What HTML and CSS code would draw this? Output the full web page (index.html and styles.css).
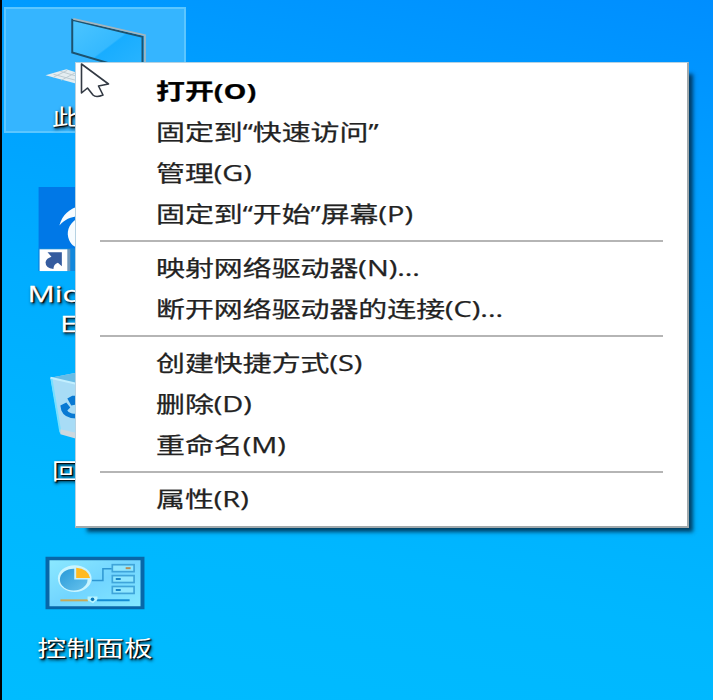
FILE: index.html
```html
<!DOCTYPE html>
<html lang="zh-CN">
<head>
<meta charset="utf-8">
<title>桌面</title>
<link rel="stylesheet" href="styles.css">
</head>
<body>
<main class="desktop">
  <div class="shortcuts">
    <div class="shortcut selected">
      <svg class="icon" viewBox="4 7 182 95">
        <defs><linearGradient id="screen" x1="0" y1="0" x2="1" y2="1"><stop offset="0" stop-color="#4cc5ff"/><stop offset=".5" stop-color="#35b9ff"/><stop offset=".52" stop-color="#18adff"/><stop offset="1" stop-color="#2cb5ff"/></linearGradient></defs>
        <path d="M72 20L143 37V74L72 53Z" fill="url(#screen)" stroke="#1c526f" stroke-width="2"/>
        <path d="M73 19L145.500 35.500V74" fill="none" stroke="#a5b5bd" stroke-width="1.800"/>
        <path d="M45 76L66 70L82 75V86Z" fill="#e4edf1"/>
        <path d="M53 75L79 82M60 72L80 78M53 78L67 71M61 81L76 73" stroke="#bccad1" stroke-width="1"/>
      </svg>
      <div class="label"><span>此电脑</span></div>
    </div>
    <div class="shortcut">
      <svg class="icon" viewBox="4 184 182 95">
        <path d="M38 187H140V272H38Z" fill="#0078e7"/>
        <path d="M38 249H75V272H38Z" fill="#1187dc"/>
        <path d="M59 226C62 215 69 209 80 206V216C70 217 64 220 59 226ZM80 217C70 222 66 230 68 238C70 245 74 248 80 249Z" fill="#f7fcff"/>
        <path d="M66 250H70V272H66Z" fill="#6f98bb"/>
        <path d="M39 250H67V272H39Z" fill="#fff"/>
        <path d="M47 253H61.500V267L57.500 263.500Q53 265 53 270Q45 269 45 263Q46 259 51 257.500Z" fill="#355c9f"/>
      </svg>
      <div class="label wide"><span>Microsoft<br>Edge</span></div>
    </div>
    <div class="shortcut">
      <svg class="icon" viewBox="4 361 182 95">
        <path d="M50 378L76 373L135 379L120 438H76L60 434Z" fill="#a8dcf6"/>
        <path d="M50 378L76 373V384Z" fill="#68bce6"/>
        <path d="M50 378L76 384" stroke="#c2efff" stroke-width="2"/>
        <path d="M51 379L60 433" stroke="#75dfff" stroke-width="2"/>
        <path d="M60 430L78 434V440L60 435Z" fill="#ccd8df"/>
        <path d="M67 399L72 396H76V405L71 406ZM60 406L66 403L70 408L67 411Q70 415 76 414V419Q64 419 61 411Z" fill="#0879d3"/>
      </svg>
      <div class="label"><span>回收站</span></div>
    </div>
    <div class="shortcut">
      <svg class="icon" viewBox="4 538 182 95">
        <defs><linearGradient id="panel" x2="1" y2="1"><stop stop-color="#8be8ff"/><stop offset=".5" stop-color="#72d5ff"/><stop offset="1" stop-color="#83e8ff"/></linearGradient><linearGradient id="pie" y2="1"><stop stop-color="#2899d8"/><stop offset="1" stop-color="#67c3ed"/></linearGradient></defs>
        <path d="M45 557H145V610H45Z" fill="#0867a8"/>
        <path d="M49 560.500H141V607H49Z" fill="url(#panel)"/>
        <ellipse cx="74.500" cy="579" rx="17" ry="13.500" fill="#c9f5ff"/>
        <ellipse cx="73.500" cy="580" rx="14" ry="11" fill="url(#pie)"/>
        <path d="M74 580V567Q90 567 91 580Z" fill="#c7f3ff"/>
        <path d="M76 578.500V568Q88 569 90 578.500Z" fill="#ffba20"/>
        <path d="M92 581H103V569H112" fill="none" stroke="#2d96d2" stroke-width="1.500"/>
        <g fill="#8ee6ff" stroke="#3fa5da" stroke-width="1.700"><rect x="112.500" y="565" width="22" height="7"/><rect x="112.500" y="576" width="22" height="7"/><rect x="112.500" y="587" width="22" height="7"/></g>
        <path d="M126 568.500H131" stroke="#b48e58" stroke-width="2"/>
        <path d="M116 579.500H121M116 590.500H121" stroke="#1885c6" stroke-width="2"/>
        <path d="M60 601H88" stroke="#c7aa58" stroke-width="2"/>
        <path d="M97 601H130" stroke="#148dd4" stroke-width="2"/>
        <path d="M87.500 597H97.500V600L93 604L87.500 601Z" fill="#b8f4ff"/><circle cx="92.500" cy="600" r="1.800" fill="#0879bd"/>
      </svg>
      <div class="label"><span>控制面板</span></div>
    </div>
  </div>
  <div class="menu" role="menu">
    <div class="item default"><span>打开(O)</span></div>
    <div class="item"><span>固定到“快速访问”</span></div>
    <div class="item"><span>管理(G)</span></div>
    <div class="item"><span>固定到“开始”屏幕(P)</span></div>
    <div class="separator"></div>
    <div class="item"><span>映射网络驱动器(N)...</span></div>
    <div class="item"><span>断开网络驱动器的连接(C)...</span></div>
    <div class="separator"></div>
    <div class="item"><span>创建快捷方式(S)</span></div>
    <div class="item"><span>删除(D)</span></div>
    <div class="item"><span>重命名(M)</span></div>
    <div class="separator"></div>
    <div class="item"><span>属性(R)</span></div>
  </div>
  <svg class="cursor" viewBox="79 61 34 40"><path d="M81.500 64V93L87.500 88L93 95Q96 98 103 95L98.500 86L108.500 84Z" fill="#fff" stroke="#333a44" stroke-width="1.600" stroke-linejoin="round"/></svg>
</main>
</body>
</html>
```
FILE: styles.css
```css
* { box-sizing: border-box; }
body { margin: 0; overflow: hidden; }
.desktop {
  position: relative;
  width: 713px;
  height: 700px;
  border-left: 2px solid #000;
  background: linear-gradient(192deg, #008eff 0%, #009dff 20%, #00adff 50%, #00b7ff 75%, #00bcff 100%);
  font: 22px/30px "Open Sans", "Noto Sans CJK SC", sans-serif;
}
.shortcuts {
  width: 184px;
  padding: 7px 0 0 2px;
  display: flex;
  flex-direction: column;
  gap: 51px;
}
.shortcut { height: 126px; width: 182px; }
.selected { background: #35b5ff; box-shadow: inset 0 0 0 2px #5bc6ff; }
.icon { display: block; width: 182px; height: 94px; }
.label {
  color: #fff;
  text-align: center;
  text-shadow: 1px 1px 1px #000, 1px 2px 3px #000;
}
.label span { display: inline-block; transform: scaleX(1.31); }
.label.wide span { transform: scaleX(1.38); -webkit-text-stroke: .3px #fff; }
.menu {
  position: absolute;
  left: 73px;
  top: 62px;
  width: 614px;
  height: 466px;
  padding: 7px 24px;
  background: #fff;
  border: 1px solid #b6d2e2;
  border-right: 2px solid #a1a9ac;
  border-bottom: 2px solid #a1a9ac;
  box-shadow: 8px 8px 4px -4px rgba(0, 38, 65, .8);
}
.item { height: 41px; padding-left: 56px; line-height: 41px; color: #222; white-space: nowrap; }
.item span { display: inline-block; transform: scaleX(1.314); transform-origin: left; -webkit-text-stroke: .25px #222; }
.default { color: #000; font-weight: 700; }
.separator { height: 13px; padding: 5.5px 0; }
.separator::before { content: ""; display: block; height: 2px; background: #b5b5b5; }
.cursor { position: absolute; left: 77px; top: 61px; width: 34px; height: 40px; }
```
